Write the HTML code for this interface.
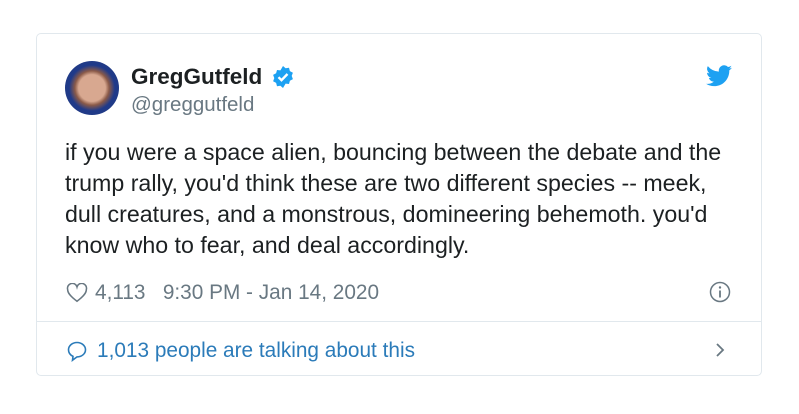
<!DOCTYPE html>
<html><head><style>
body{margin:0;width:799px;height:414px;background:#fff;font-family:"Liberation Sans",Arial,sans-serif;position:relative;overflow:hidden}
.card{position:absolute;left:36px;top:33px;width:726px;height:343px;border:1px solid #e1e8ed;border-radius:5px;box-sizing:border-box}
.a{position:absolute;white-space:nowrap}
</style></head><body>
<div class="card"></div>
<div class="a" style="left:65px;top:61px;width:54px;height:54px;border-radius:50%;background:radial-gradient(circle at 50% 50%,#d8a890 0 35%,#8a5a48 45%,#1f3a8a 60%,#233a7a 100%)"></div>
<div class="a" style="left:131px;top:64px;font-size:22.5px;font-weight:bold;color:#1c2022">GregGutfeld</div>
<svg class="a" style="left:271px;top:65px" width="24" height="24" viewBox="0 0 24 24"><path fill="#1da1f2" d="M12 1l2.6 2.2 3.4-.4.9 3.3 3 1.6-1.2 3.2 1.2 3.2-3 1.6-.9 3.3-3.4-.4L12 23l-2.6-2.2-3.4.4-.9-3.3-3-1.6 1.2-3.2L2.1 9.9l3-1.6.9-3.3 3.4.4z"/><path d="M7.5 12.2l3 3 6-6.2" stroke="#fff" stroke-width="2.4" fill="none"/></svg>
<div class="a" style="left:131px;top:93px;font-size:20.5px;color:#697882">@greggutfeld</div>
<svg class="a" style="left:706px;top:65px" width="26" height="22" viewBox="0 0 24 20"><path fill="#1da1f2" d="M24 2.4c-.9.4-1.8.7-2.8.8 1-.6 1.8-1.6 2.2-2.7-1 .6-2 1-3.1 1.2A4.9 4.9 0 0 0 11.9 6 14 14 0 0 1 1.7.9a4.9 4.9 0 0 0 1.5 6.6c-.8 0-1.6-.2-2.2-.6 0 2.4 1.7 4.4 3.9 4.8-.7.2-1.5.2-2.2.1.6 2 2.4 3.4 4.6 3.4A9.9 9.9 0 0 1 0 17.2 14 14 0 0 0 7.5 19.4c9.1 0 14-7.5 14-14v-.6c1-.7 1.8-1.6 2.5-2.4z"/></svg>
<div class="a" style="left:65px;top:137px;font-size:23.2px;line-height:31px;color:#1c2022">if you were a space alien, bouncing between the debate and the<br>trump rally, you'd think these are two different species -- meek,<br>dull creatures, and a monstrous, domineering behemoth. you'd<br>know who to fear, and deal accordingly.</div>
<svg class="a" style="left:66px;top:283px" width="22" height="20" viewBox="0 0 20 18"><path d="M10 16.5C4 12 1.5 9 1.5 5.8A4.2 4.2 0 0 1 10 3.5a4.2 4.2 0 0 1 8.5 2.3C18.5 9 16 12 10 16.5z" fill="none" stroke="#697882" stroke-width="1.4"/></svg>
<div class="a" style="left:95px;top:281px;font-size:20.8px;color:#697882">4,113&nbsp;&nbsp;&nbsp;9:30 PM - Jan 14, 2020</div>
<svg class="a" style="left:709px;top:281px" width="22" height="22" viewBox="0 0 22 22"><circle cx="11" cy="11" r="9.5" fill="none" stroke="#697882" stroke-width="1.5"/><circle cx="11" cy="6.5" r="1.2" fill="#697882"/><path d="M11 9.5v7" stroke="#697882" stroke-width="1.8"/></svg>
<div class="a" style="left:36px;top:321px;width:726px;height:1px;background:#e1e8ed"></div>
<svg class="a" style="left:66px;top:340px" width="22" height="22" viewBox="0 0 22 22"><path d="M11 2.5c4.7 0 8.5 3.2 8.5 7.2s-3.8 7.2-8.5 7.2l-4.5 3.3.5-3.9C4.2 15 2.5 12.5 2.5 9.7 2.5 5.7 6.3 2.5 11 2.5z" fill="none" stroke="#2b7bb9" stroke-width="1.6"/></svg>
<div class="a" style="left:97px;top:339px;font-size:20.8px;color:#2b7bb9">1,013 people are talking about this</div>
<svg class="a" style="left:713px;top:341px" width="14" height="18" viewBox="0 0 14 18"><path d="M4 3l6 6-6 6" fill="none" stroke="#697882" stroke-width="1.8"/></svg>
</body></html>
